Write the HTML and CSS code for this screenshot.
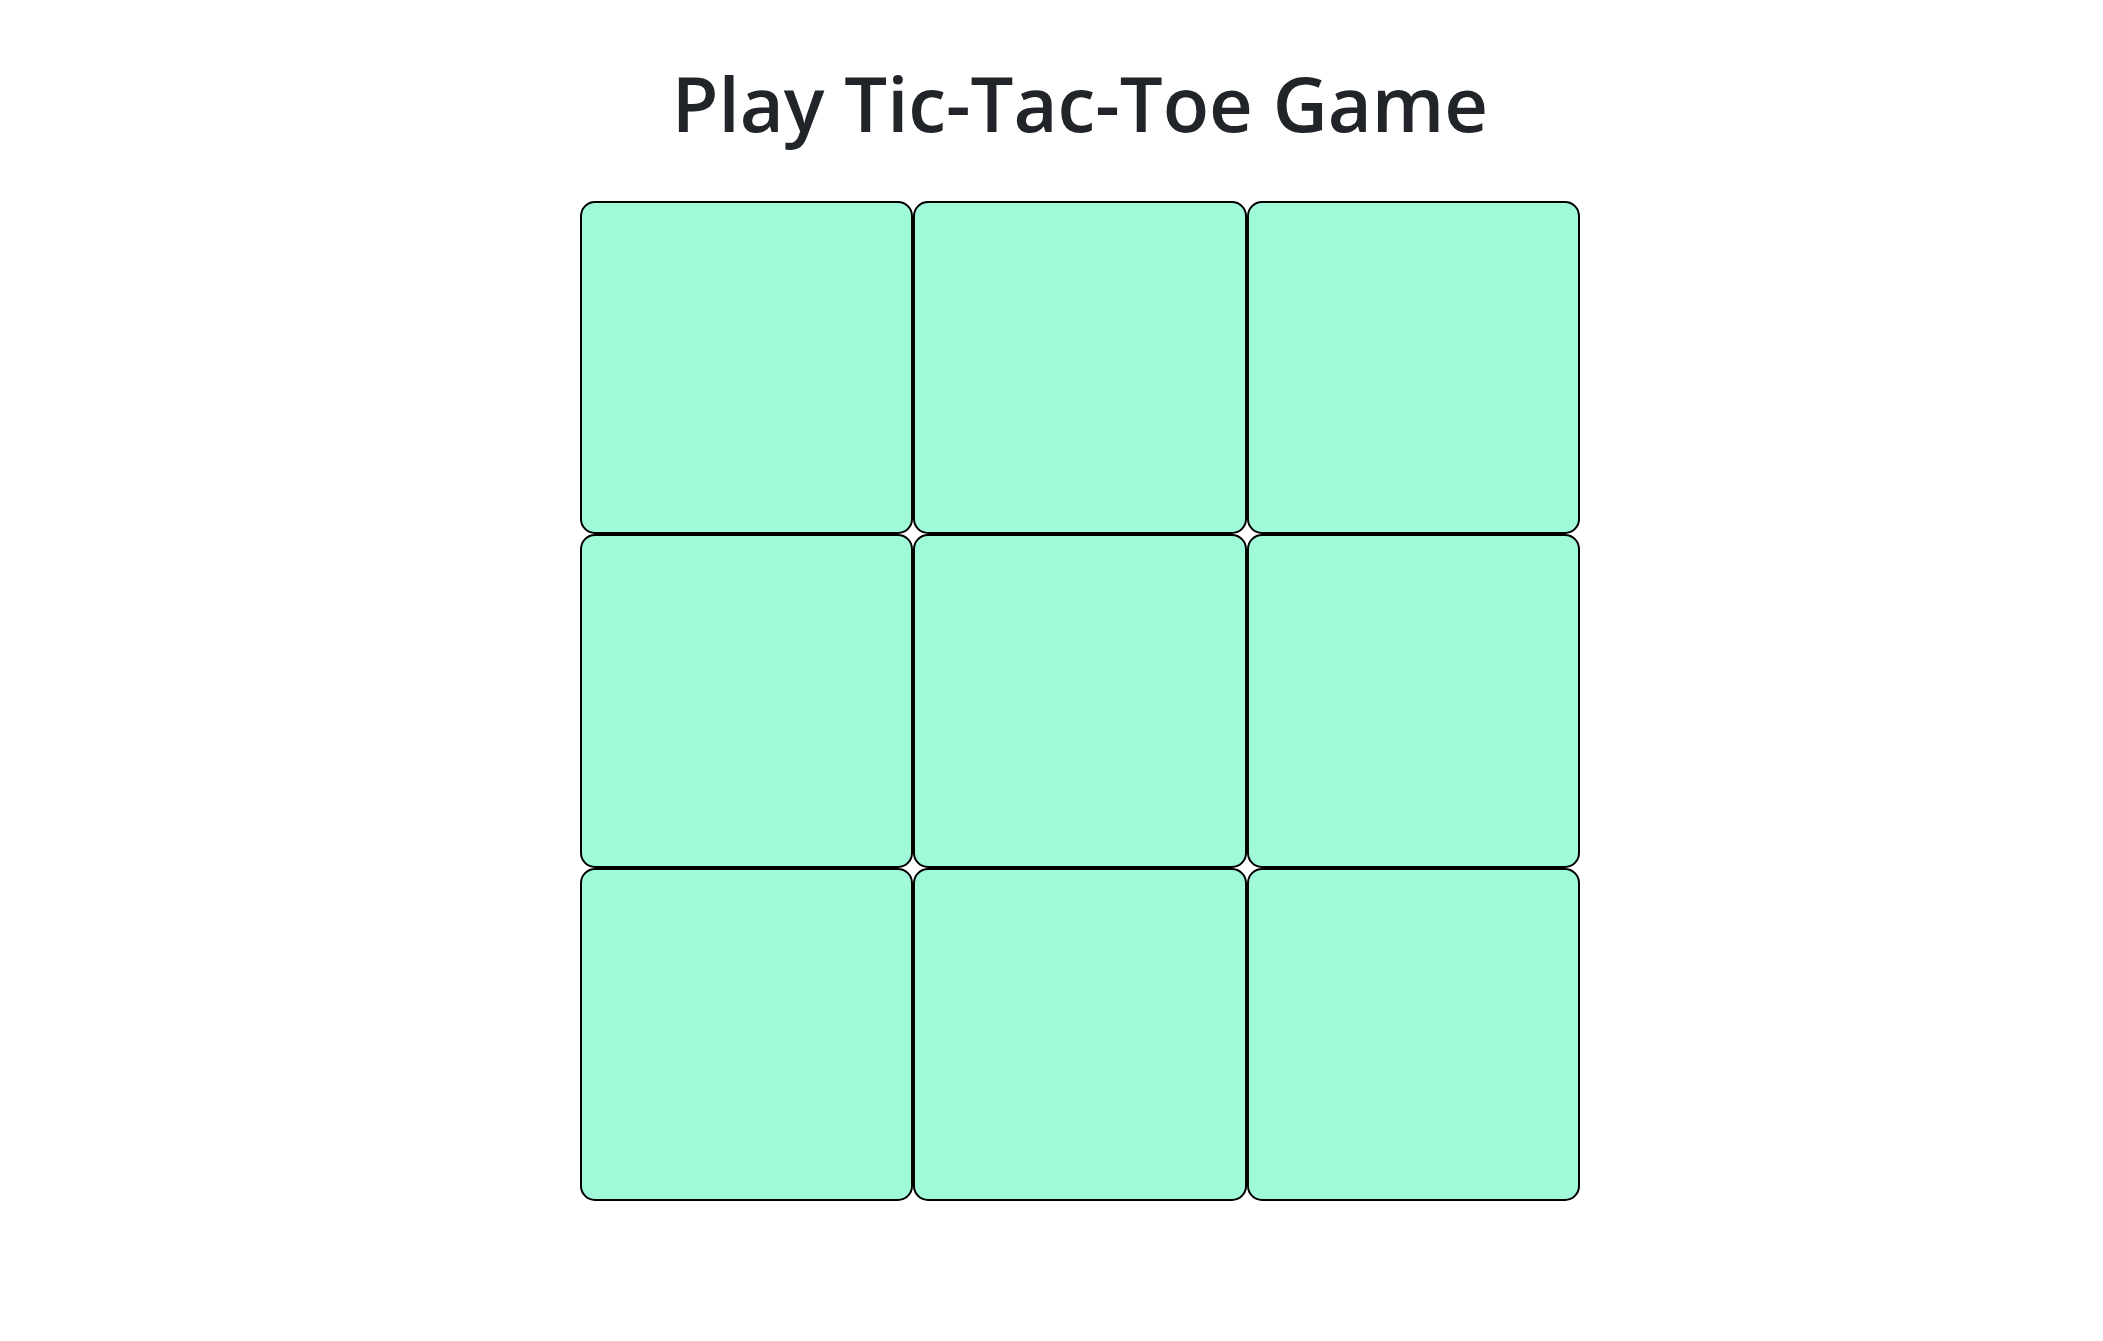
FILE: index.html
```html
<!DOCTYPE html>
<html lang="en">
<head>
<meta charset="utf-8">
<title>Tic-Tac-Toe</title>
<link rel="stylesheet" href="styles.css">
</head>
<body>
<main class="game">
  <h1 class="title">Play Tic-Tac-Toe Game</h1>
  <div class="board">
    <div class="cell"></div>
    <div class="cell"></div>
    <div class="cell"></div>
    <div class="cell"></div>
    <div class="cell"></div>
    <div class="cell"></div>
    <div class="cell"></div>
    <div class="cell"></div>
    <div class="cell"></div>
  </div>
</main>
</body>
</html>
```

FILE: styles.css
```css
html, body {
  margin: 0;
  padding: 0;
  background: #ffffff;
}

body {
  font-family: "Open Sans", "Noto Sans", sans-serif;
  color: #212529;
}

.game {
  width: 1000px;
  margin-left: 580px;
  display: flex;
  flex-direction: column;
  align-items: center;
}

.title {
  margin: 57px 0 53px;
  font-size: 76px;
  line-height: 91px;
  font-weight: 600;
  color: #212529;
  white-space: nowrap;
}

.board {
  display: grid;
  grid-template-columns: repeat(3, 333.33px);
  grid-template-rows: repeat(3, 333.33px);
}

.cell {
  box-sizing: border-box;
  border: 2px solid #000000;
  border-radius: 15px;
  background: #a0fad8;
}
```
